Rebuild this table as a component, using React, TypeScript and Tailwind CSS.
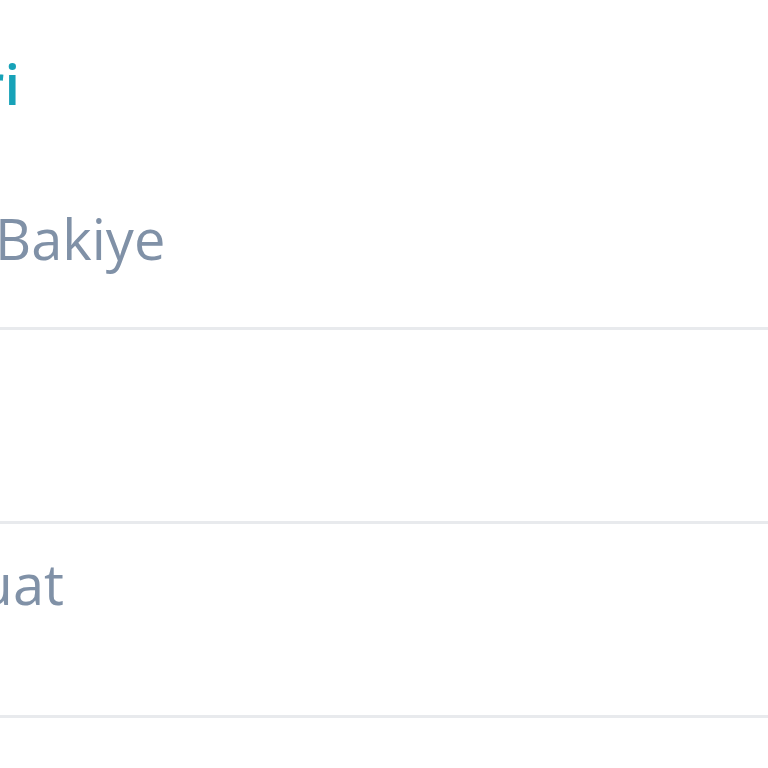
import React from "react";

export default function App() {
  const font = { fontFamily: '"Open Sans", "Noto Sans", sans-serif' };
  return (
    <div className="w-[768px] h-[768px] bg-white overflow-hidden" style={font}>
      <div className="pt-[55px]">
        <div className="flex justify-end w-[20px]">
          <span className="shrink-0 whitespace-nowrap text-[56px] leading-none font-semibold text-[#17a2b8]">
            Hesap Bilgileri
          </span>
        </div>
      </div>
      <div className="mt-[99px] ml-[-5px] text-[56px] leading-none text-[#8091a7] whitespace-nowrap">
        Bakiye
      </div>
      <div className="mt-[61px] h-[3px] bg-[#e8eaed]" />
      <div className="h-[191px]" />
      <div className="h-[3px] bg-[#e8eaed]" />
      <div className="pt-[31px] pb-[104px]">
        <div className="flex justify-end w-[64px]">
          <span className="shrink-0 whitespace-nowrap text-[56px] leading-none text-[#8091a7]">
            Muat
          </span>
        </div>
      </div>
      <div className="h-[3px] bg-[#e8eaed]" />
    </div>
  );
}
